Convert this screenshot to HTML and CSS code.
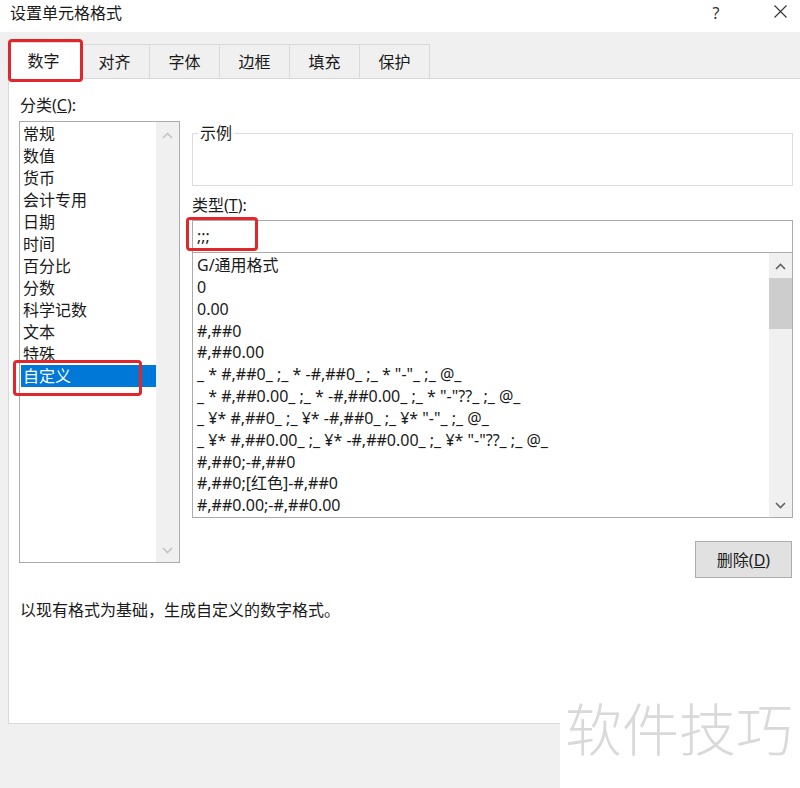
FILE: index.html
```html
<!DOCTYPE html>
<html lang="zh-CN">
<head>
<meta charset="utf-8">
<title>设置单元格格式</title>
<link rel="stylesheet" href="styles.css">
</head>
<body>
<div class="window">
  <header class="titlebar">
    <span class="title">设置单元格格式</span>
    <div class="title-actions">
      <span class="help">?</span>
      <svg class="close" width="13" height="13" viewBox="0 0 13 13"><path d="M0.5 0.5L12.5 12.5M12.5 0.5L0.5 12.5" stroke="#333" stroke-width="1.1" fill="none"/></svg>
    </div>
  </header>

  <nav class="tabs">
    <div class="tab active">数字</div>
    <div class="tab">对齐</div>
    <div class="tab">字体</div>
    <div class="tab">边框</div>
    <div class="tab">填充</div>
    <div class="tab">保护</div>
  </nav>

  <main class="panel">
    <div class="content">
      <section class="category">
        <div class="label">分类(<u>C</u>):</div>
        <div class="listbox cat-list">
          <ul class="items">
            <li>常规</li>
            <li>数值</li>
            <li>货币</li>
            <li>会计专用</li>
            <li>日期</li>
            <li>时间</li>
            <li>百分比</li>
            <li>分数</li>
            <li>科学记数</li>
            <li>文本</li>
            <li>特殊</li>
            <li class="selected">自定义</li>
          </ul>
          <div class="scrollbar disabled">
            <div class="sb-btn up"><svg width="11" height="7" viewBox="0 0 11 7"><polyline points="1,6 5.5,1.5 10,6" fill="none" stroke-width="1.6"/></svg></div>
            <div class="sb-track"></div>
            <div class="sb-btn down"><svg width="11" height="7" viewBox="0 0 11 7"><polyline points="1,1 5.5,5.5 10,1" fill="none" stroke-width="1.6"/></svg></div>
          </div>
        </div>
      </section>

      <section class="format">
        <div class="sample"><span class="sample-label">示例</span></div>
        <div class="label type-label">类型(<u>T</u>):</div>
        <div class="type-input">;;;</div>
        <div class="listbox type-list">
          <ul class="items">
            <li>G/通用格式</li>
            <li>0</li>
            <li>0.00</li>
            <li>#,##0</li>
            <li>#,##0.00</li>
            <li>_ * #,##0_ ;_ * -#,##0_ ;_ * "-"_ ;_ @_</li>
            <li>_ * #,##0.00_ ;_ * -#,##0.00_ ;_ * "-"??_ ;_ @_</li>
            <li>_ ¥* #,##0_ ;_ ¥* -#,##0_ ;_ ¥* "-"_ ;_ @_</li>
            <li>_ ¥* #,##0.00_ ;_ ¥* -#,##0.00_ ;_ ¥* "-"??_ ;_ @_</li>
            <li>#,##0;-#,##0</li>
            <li>#,##0;[红色]-#,##0</li>
            <li>#,##0.00;-#,##0.00</li>
          </ul>
          <div class="scrollbar">
            <div class="sb-btn up"><svg width="11" height="7" viewBox="0 0 11 7"><polyline points="1,6 5.5,1.5 10,6" fill="none" stroke-width="1.6"/></svg></div>
            <div class="sb-thumb"></div>
            <div class="sb-track"></div>
            <div class="sb-btn down"><svg width="11" height="7" viewBox="0 0 11 7"><polyline points="1,1 5.5,5.5 10,1" fill="none" stroke-width="1.6"/></svg></div>
          </div>
        </div>
        <div class="actions">
          <button class="btn" type="button">删除(<u>D</u>)</button>
        </div>
      </section>
    </div>
    <p class="desc">以现有格式为基础，生成自定义的数字格式。</p>
  </main>

  <div class="mark mark-tab"></div>
  <div class="mark mark-input"></div>
  <div class="mark mark-item"></div>

  <div class="watermark">软件技巧</div>
</div>
</body>
</html>
```

FILE: styles.css
```css
* { box-sizing: border-box; }

body {
  margin: 0;
  font-family: "Noto Sans", "Noto Sans CJK SC", sans-serif;
  font-size: 16px;
  color: #1a1a1a;
  background: #f0f0f0;
}

.window {
  position: relative;
  width: 800px;
  height: 788px;
  overflow: hidden;
  background: #f0f0f0;
}

/* title bar */
.titlebar {
  height: 32px;
  background: #fff;
  display: flex;
  justify-content: space-between;
  align-items: flex-start;
  padding: 2px 0 0 10px;
}
.title { line-height: 22px; }
.title-actions {
  display: flex;
  align-items: center;
  height: 22px;
}
.help {
  width: 10px;
  text-align: center;
  color: #333;
  font-size: 16px;
  margin-right: 53px;
}
.close { display: block; margin-right: 13px; margin-top: -3px; }

/* tabs */
.tabs {
  position: relative;
  z-index: 1;
  display: flex;
  align-items: flex-end;
  margin-top: 10px;
  padding-left: 10px;
}
.tab {
  width: 70px;
  height: 34px;
  border-top: 1px solid #d9d9d9;
  border-right: 1px solid #d9d9d9;
  background: #f0f0f0;
  display: flex;
  align-items: center;
  justify-content: center;
  line-height: 22px;
}
.tab.active {
  position: relative;
  z-index: 2;
  width: 74px;
  height: 37px;
  margin: 0 -2px -1px -2px;
  background: #fff;
  border: 1px solid #d9d9d9;
  border-bottom: none;
  padding-bottom: 1px;
  padding-right: 3px;
}

/* panel */
.panel {
  margin-left: 8px;
  height: 646px;
  background: #fff;
  border-top: 1px solid #d9d9d9;
  border-left: 1px solid #d9d9d9;
  border-bottom: 1px solid #d9d9d9;
  padding: 15px 0 0 10px;
}
.content { display: flex; }
.label { line-height: 22px; padding-left: 1px; }

.category { width: 161px; }
.format { width: 601px; margin-left: 12px; }

/* list boxes */
.listbox {
  display: flex;
  background: #fff;
  border: 1px solid #ababab;
  overflow: hidden;
}
.items {
  list-style: none;
  margin: 0;
  padding: 0 0 0 1px;
  flex: 1;
  min-width: 0;
}
.items li {
  height: 22px;
  line-height: 22px;
  padding-left: 3px;
  white-space: nowrap;
}
.items li.selected { background: #0078d7; color: #fff; }

.cat-list { margin-top: 5px; height: 442px; }
.cat-list .items { padding-left: 1px; padding-top: 1px; }
.cat-list .items li { padding-left: 2px; }

.scrollbar {
  width: 23px;
  flex: none;
  background: #f0f0f0;
  display: flex;
  flex-direction: column;
}
.sb-btn {
  height: 25px;
  flex: none;
  display: flex;
  justify-content: center;
}
.sb-btn svg { display: block; }
.sb-btn.up svg { margin-top: 10px; }
.sb-btn.down svg { margin-top: 10px; }
.sb-btn svg polyline { stroke: #606060; }
.scrollbar.disabled .sb-btn svg polyline { stroke: #c4c4c4; }
.sb-thumb { height: 51px; background: #cdcdcd; flex: none; }
.sb-track { flex: 1; }

/* right side */
.sample {
  margin-top: 39px;
  height: 53px;
  border: 1px solid #dcdcdc;
}
.sample-label {
  display: block;
  width: fit-content;
  margin: -10px 0 0 5px;
  padding: 0 2px;
  background: #fff;
  line-height: 18px;
}
.type-label { margin-top: 8px; padding-left: 0; }
.type-input {
  margin-top: 4px;
  height: 33px;
  border: 1px solid #ababab;
  padding-left: 4px;
  line-height: 31px;
  background: #fff;
}
.type-list { margin-top: -1px; height: 266px; }
.type-list .items { padding-top: 2px; }
.type-list .items li { height: 21.85px; line-height: 21.85px; }

.actions {
  display: flex;
  justify-content: flex-end;
  margin-top: 23px;
  padding-right: 1px;
}
.btn {
  width: 97px;
  height: 37px;
  background: #e1e1e1;
  border: 1px solid #adadad;
  font: inherit;
  color: inherit;
  padding: 0;
  line-height: 22px;
}

.desc {
  margin: 21px 0 0 1px;
  line-height: 22px;
}

/* red annotation boxes */
.mark {
  position: absolute;
  border: 3px solid #e0272b;
  border-radius: 4px;
  z-index: 5;
}
.mark-tab { left: 8px; top: 39px; width: 75px; height: 43px; }
.mark-input { left: 186px; top: 217px; width: 72px; height: 34px; }
.mark-item { left: 13px; top: 360px; width: 129px; height: 36px; }

/* watermark */
.watermark {
  position: absolute;
  left: 560px;
  top: 690px;
  width: 240px;
  height: 98px;
  background: #fff;
  z-index: 4;
  font-family: "Noto Sans CJK SC", sans-serif;
  font-weight: 300;
  font-size: 57px;
  line-height: 57px;
  color: #d9d9d9;
  padding: 8px 0 0 5px;
  white-space: nowrap;
}
```
